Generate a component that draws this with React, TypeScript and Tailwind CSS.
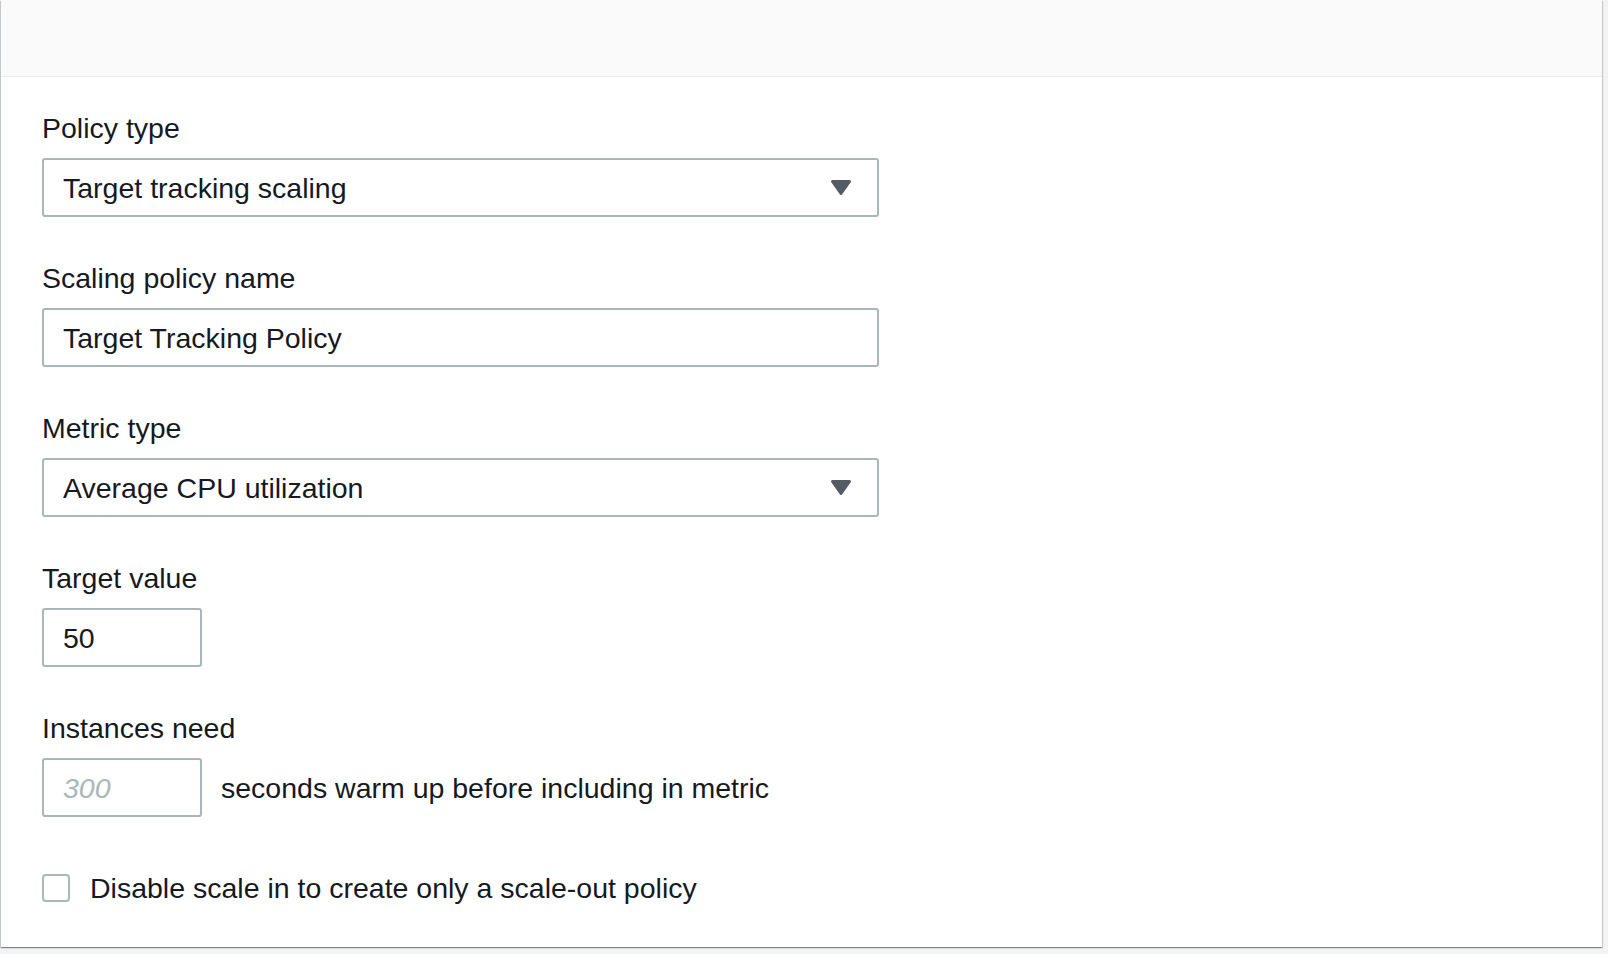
import React, { useState } from 'react';

const font = { fontFamily: '"Liberation Sans", Arial, sans-serif' };

const Caret: React.FC = () => (
  <svg width="22" height="17" viewBox="0 0 22 17" className="shrink-0">
    <path d="M2.5 2.5 H19.5 L11 14.5 Z" fill="#545b64" stroke="#545b64" strokeWidth="3" strokeLinejoin="round" />
  </svg>
);

const Label: React.FC<{ text: string }> = ({ text }) => (
  <div className="h-[40px] leading-[40px] text-[28.5px] text-[#16191f]">{text}</div>
);

const SelectBox: React.FC<{ value: string }> = ({ value }) => (
  <div className="mt-[10px] flex h-[59px] w-[837px] items-center justify-between rounded-[3px] border-2 border-[#aab7b8] bg-white pl-[19px] pr-[25px]">
    <span className="leading-[40px] text-[28.5px] text-[#16191f]">{value}</span>
    <Caret />
  </div>
);

const App: React.FC = () => {
  const [disableScaleIn, setDisableScaleIn] = useState(false);

  return (
    <div className="min-h-screen bg-[#f2f3f3] pl-[1px] pr-[6px] pb-[7px]" style={font}>
      <div className="flex h-[947px] flex-col bg-white shadow-[0_1px_1px_0_rgba(0,28,36,0.3),1px_1px_1px_0_rgba(0,28,36,0.15),-1px_1px_1px_0_rgba(0,28,36,0.15)]">
        <div className="h-[77px] shrink-0 border-b border-[#eaeded] bg-[#fafafa]" />

        <div className="flex flex-col pl-[41px] pt-[31px]">
          <Label text="Policy type" />
          <SelectBox value="Target tracking scaling" />

          <div className="mt-[41px]">
            <Label text="Scaling policy name" />
            <div className="mt-[10px] flex h-[59px] w-[837px] items-center rounded-[3px] border-2 border-[#aab7b8] bg-white pl-[19px]">
              <span className="leading-[40px] text-[28.5px] text-[#16191f]">Target Tracking Policy</span>
            </div>
          </div>

          <div className="mt-[41px]">
            <Label text="Metric type" />
            <SelectBox value="Average CPU utilization" />
          </div>

          <div className="mt-[41px]">
            <Label text="Target value" />
            <div className="mt-[10px] flex h-[59px] w-[160px] items-center rounded-[3px] border-2 border-[#aab7b8] bg-white pl-[19px]">
              <span className="leading-[40px] text-[28.5px] text-[#16191f]">50</span>
            </div>
          </div>

          <div className="mt-[41px]">
            <Label text="Instances need" />
            <div className="mt-[10px] flex items-center gap-[19px]">
              <div className="flex h-[59px] w-[160px] items-center rounded-[3px] border-2 border-[#aab7b8] bg-white pl-[19px]">
                <span className="italic leading-[40px] text-[28.5px] text-[#aab7b8]">300</span>
              </div>
              <span className="leading-[40px] text-[28.5px] text-[#16191f]">seconds warm up before including in metric</span>
            </div>
          </div>

          <label className="mt-[51px] flex h-[40px] cursor-pointer items-center gap-[20px]">
            <span
              onClick={() => setDisableScaleIn(!disableScaleIn)}
              className={`h-[28px] w-[28px] rounded-[4px] border-2 ${disableScaleIn ? 'border-[#0073bb] bg-[#0073bb]' : 'border-[#aab7b8] bg-white'}`}
            />
            <span className="leading-[40px] text-[28.5px] text-[#16191f]">Disable scale in to create only a scale-out policy</span>
          </label>
        </div>
      </div>
    </div>
  );
};

export default App;
